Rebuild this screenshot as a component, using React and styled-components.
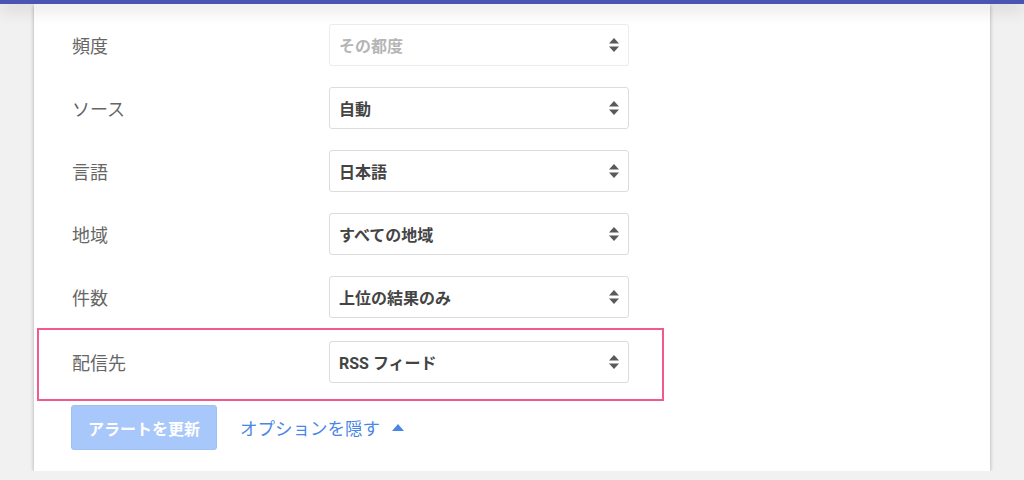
import React from "react";
import styled, { createGlobalStyle } from "styled-components";

const GlobalStyle = createGlobalStyle`
  html, body {
    margin: 0;
    padding: 0;
    background: #f1f1f1;
    font-family: Roboto, "Noto Sans CJK JP", sans-serif;
  }
`;

const TopBar = styled.div`
  position: relative;
  z-index: 2;
  height: 4px;
  background: #4a54b3;
  box-shadow: 0 4px 16px rgba(0, 0, 0, 0.28);
`;

const Card = styled.div`
  width: 956px;
  margin: 0 0 0 34px;
  background: #fff;
  box-shadow: 0 1px 4px rgba(0, 0, 0, 0.3);
  padding: 20px 0 21px 38px;
  box-sizing: border-box;
`;

const Row = styled.div`
  display: flex;
  align-items: center;
  height: 42px;
  margin-bottom: ${p => (p.$last ? "10px" : "21px")};
`;

const Highlight = styled.div`
  width: 627px;
  box-sizing: border-box;
  margin-left: -35px;
  padding: 11px 0 16px 33px;
  border: 2px solid #f2598e;
`;

const Label = styled.div`
  width: 257px;
  font-size: 18px;
  color: #666;
`;

const Select = styled.div`
  width: 300px;
  height: 42px;
  box-sizing: border-box;
  display: flex;
  align-items: center;
  justify-content: space-between;
  padding: 0 8px 0 9px;
  border: 1px solid ${p => (p.$disabled ? "#ececec" : "#dcdcdc")};
  border-radius: 3px;
  font-size: 16px;
  font-weight: 700;
  color: ${p => (p.$disabled ? "#b5b5b5" : "#444")};
`;

const Footer = styled.div`
  display: flex;
  align-items: center;
  margin-top: 4px;
  margin-left: -1px;
`;

const Button = styled.button`
  width: 146px;
  height: 45px;
  border: 1px solid #9fc0f5;
  border-radius: 3px;
  background: #a8c7fa;
  color: #fff;
  font-family: inherit;
  font-size: 16px;
  font-weight: 700;
`;

const ToggleLink = styled.a`
  display: flex;
  align-items: center;
  margin-left: 23px;
  font-size: 17.5px;
  color: #4a86e8;
  cursor: pointer;
`;

const Arrows = () => (
  <svg width="12" height="16" viewBox="0 0 12 16">
    <path d="M6 1 L11 6.5 L1 6.5 Z" fill="#595959" />
    <path d="M1 9.5 L11 9.5 L6 15 Z" fill="#595959" />
  </svg>
);

const UpTriangle = () => (
  <svg width="12" height="7" viewBox="0 0 12 7" style={{ marginLeft: 12 }}>
    <path d="M6 0 L12 7 L0 7 Z" fill="#4a86e8" />
  </svg>
);

const fields = [
  { label: "頻度", value: "その都度", disabled: true },
  { label: "ソース", value: "自動" },
  { label: "言語", value: "日本語" },
  { label: "地域", value: "すべての地域" },
  { label: "件数", value: "上位の結果のみ" }
];

export default function App() {
  return (
    <>
      <GlobalStyle />
      <TopBar />
      <Card>
        {fields.map((f, i) => (
          <Row key={f.label} $last={i === fields.length - 1}>
            <Label>{f.label}</Label>
            <Select $disabled={f.disabled}>
              <span>{f.value}</span>
              <Arrows />
            </Select>
          </Row>
        ))}
        <Highlight>
          <Row $last style={{ marginBottom: 0 }}>
            <Label>配信先</Label>
            <Select>
              <span>RSS フィード</span>
              <Arrows />
            </Select>
          </Row>
        </Highlight>
        <Footer>
          <Button>アラートを更新</Button>
          <ToggleLink>
            オプションを隠す
            <UpTriangle />
          </ToggleLink>
        </Footer>
      </Card>
    </>
  );
}
